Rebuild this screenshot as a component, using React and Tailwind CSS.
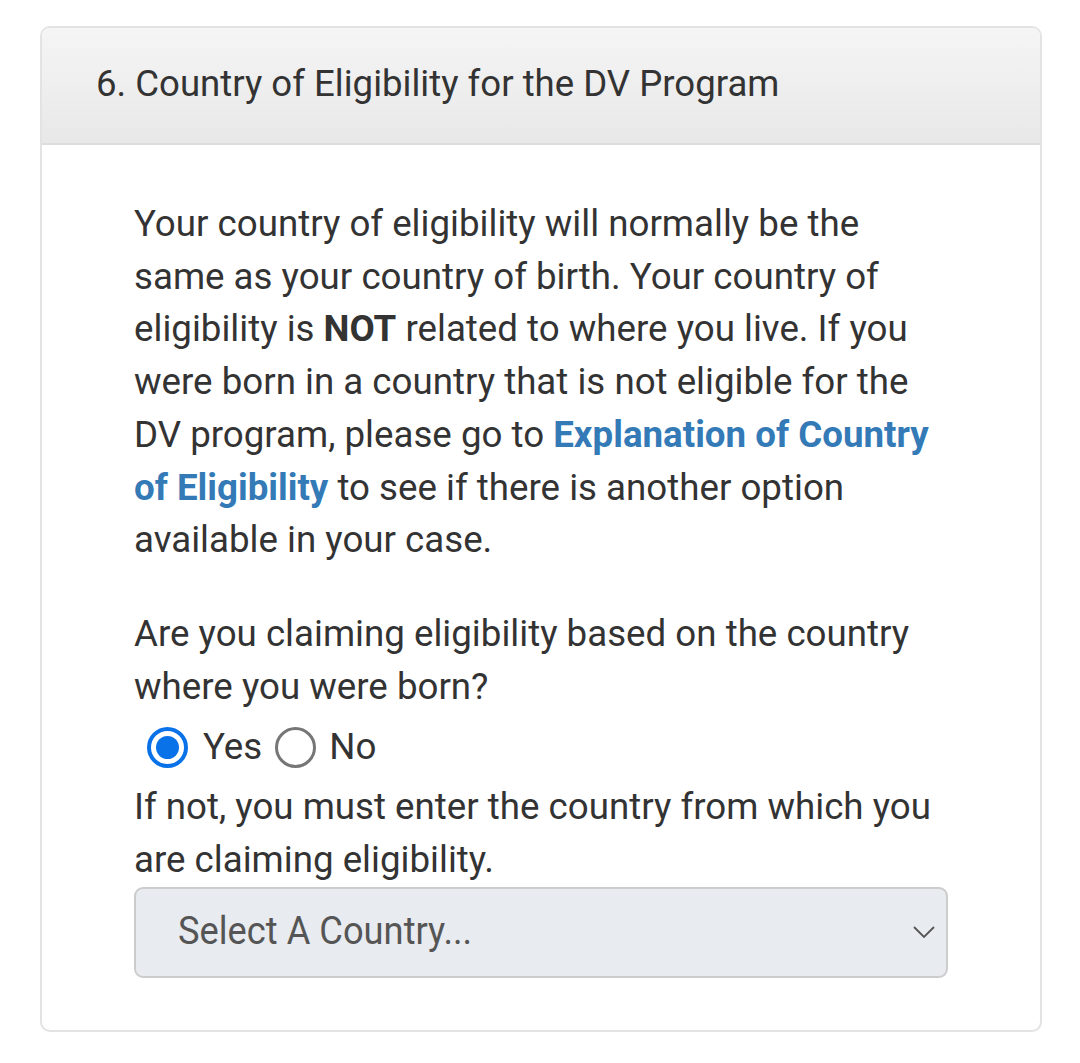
import React from "react";

export default function App() {
  return (
    <div className="w-[1080px] h-[1063px] bg-white pt-[26px] px-[40px]" style={{ fontFamily: "Roboto, 'Liberation Sans', sans-serif" }}>
      <div className="w-[1002px] h-[1006px] border-2 border-[#e3e3e3] rounded-[10px] overflow-hidden flex flex-col">
        <div className="h-[117px] shrink-0 bg-gradient-to-b from-[#f5f5f5] to-[#e8e8e8] border-b-2 border-[#dddddd] flex items-center pl-[54px]">
          <h3 className="text-[36.6px] text-[#333333] leading-none -mt-[2px]">6. Country of Eligibility for the DV Program</h3>
        </div>
        <div className="pl-[92px] pr-[92px] pt-[53px] text-[36.7px] leading-[52.7px] text-[#333333]">
          <p className="mb-[41px]">
            Your country of eligibility will normally be the same as your country of birth. Your country of eligibility is <b className="font-bold">NOT</b> related to where you live. If you were born in a country that is not eligible for the DV program, please go to{" "}
            <a className="text-[#337ab7] font-bold">Explanation of Country of Eligibility</a> to see if there is another option available in your case.
          </p>
          <p>Are you claiming eligibility based on the country where you were born?</p>
          <div className="flex items-center h-[68px] pl-[13px]">
            <span className="w-[41px] h-[41px] rounded-full border-[4px] border-[#0a72e8] flex items-center justify-center bg-white">
              <span className="w-[23px] h-[23px] rounded-full bg-[#0a72e8]" />
            </span>
            <span className="ml-[15px]">Yes</span>
            <span className="ml-[13px] w-[41px] h-[41px] rounded-full border-[3px] border-[#767676] bg-white" />
            <span className="ml-[13px]">No</span>
          </div>
          <p>If not, you must enter the country from which you are claiming eligibility.</p>
          <div className="h-[91px] bg-[#e8ebef] border-2 border-[#cccccc] rounded-[9px] flex items-center justify-between pl-[42px] pr-[10px]">
            <span className="inline-block origin-left scale-x-[0.93] text-[#555555] text-[39px] whitespace-nowrap -mt-[2px]">Select A Country...</span>
            <svg width="24" height="14" viewBox="0 0 24 14">
              <path d="M2 2 L12 12 L22 2" fill="none" stroke="#555" strokeWidth="1.8" />
            </svg>
          </div>
        </div>
      </div>
    </div>
  );
}
